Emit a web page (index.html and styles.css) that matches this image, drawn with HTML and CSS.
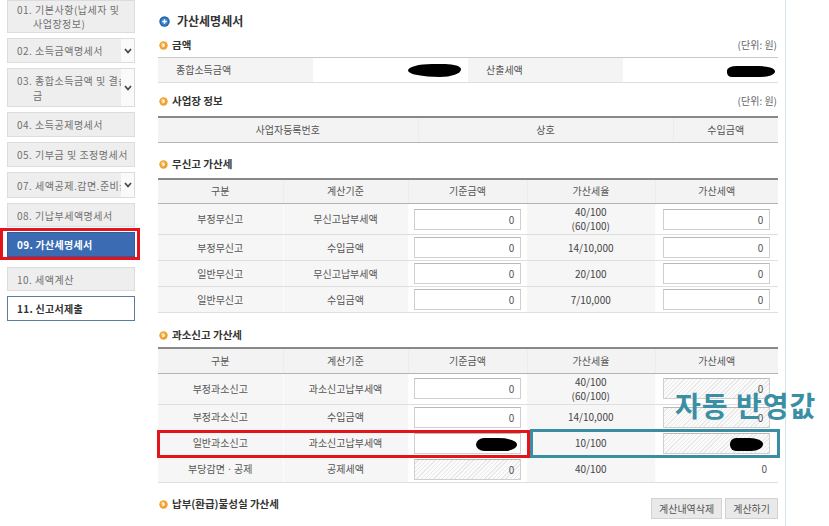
FILE: index.html
```html
<!doctype html>
<html>
<head>
	<meta charset="utf-8">
	<title>가산세명세서</title>
	<link rel="stylesheet" href="styles.css">
</head>
<body>
<div class="page">

	<ul class="menu">
		<li class="step tall first"><span class="label">01. 기본사항(납세자 및<br>사업장정보)</span></li>
		<li class="step"><span class="label">02. 소득금액명세서</span><span class="drop"><svg width="8" height="6" viewBox="0 0 8 6"><polyline points="1,1 4,4.5 7,1" fill="none" stroke="#444" stroke-width="1.7"/></svg></span></li>
		<li class="step tall wide"><span class="label">03. 종합소득금액 및 결손<br>금</span><span class="drop"><svg width="8" height="6" viewBox="0 0 8 6"><polyline points="1,1 4,4.5 7,1" fill="none" stroke="#444" stroke-width="1.7"/></svg></span></li>
		<li class="step"><span class="label">04. 소득공제명세서</span></li>
		<li class="step"><span class="label">05. 기부금 및 조정명세서</span></li>
		<li class="step"><span class="label">07. 세액공제.감면.준비금</span><span class="drop"><svg width="8" height="6" viewBox="0 0 8 6"><polyline points="1,1 4,4.5 7,1" fill="none" stroke="#444" stroke-width="1.7"/></svg></span></li>
		<li class="step"><span class="label">08. 기납부세액명세서</span></li>
		<li class="step on"><span class="label">09. 가산세명세서</span></li>
		<li class="step after"><span class="label">10. 세액계산</span></li>
		<li class="step last"><span class="label">11. 신고서제출</span></li>
	</ul>

	<div class="main">

		<h1 class="title">
			<svg width="11" height="11" viewBox="0 0 11 11"><circle cx="5.5" cy="5.5" r="5.2" fill="#2566ad"/><circle cx="5.5" cy="5.5" r="3.6" fill="#3d86cf"/><path d="M3.3 5.5h4.4M5.5 3.3v4.4" stroke="#fff" stroke-width="1.4"/></svg>
			가산세명세서
		</h1>

		<div class="head">
			<svg class="dot" width="9" height="9" viewBox="0 0 9 9"><circle cx="4.5" cy="4.5" r="4.2" fill="#f0a032"/><circle cx="4" cy="3.8" r="2.2" fill="#f8c56c"/><polyline points="3.5,2.8 5.2,4.5 3.5,6.2" fill="none" stroke="#fff" stroke-width="1.1"/></svg>
			<span>금액</span>
			<em class="unit">(단위: 원)</em>
		</div>
		<table class="sum">
			<tr>
				<td class="key">종합소득금액</td>
				<td class="val"><span class="redact r1"></span></td>
				<td class="key">산출세액</td>
				<td class="val tight"><span class="redact r2"></span></td>
			</tr>
		</table>

		<div class="head">
			<svg class="dot" width="9" height="9" viewBox="0 0 9 9"><circle cx="4.5" cy="4.5" r="4.2" fill="#f0a032"/><circle cx="4" cy="3.8" r="2.2" fill="#f8c56c"/><polyline points="3.5,2.8 5.2,4.5 3.5,6.2" fill="none" stroke="#fff" stroke-width="1.1"/></svg>
			<span>사업장 정보</span>
			<em class="unit">(단위: 원)</em>
		</div>
		<table class="grid biz">
			<colgroup><col style="width:260px"><col style="width:255px"><col></colgroup>
			<tr><th>사업자등록번호</th><th>상호</th><th>수입금액</th></tr>
		</table>

		<div class="head">
			<svg class="dot" width="9" height="9" viewBox="0 0 9 9"><circle cx="4.5" cy="4.5" r="4.2" fill="#f0a032"/><circle cx="4" cy="3.8" r="2.2" fill="#f8c56c"/><polyline points="3.5,2.8 5.2,4.5 3.5,6.2" fill="none" stroke="#fff" stroke-width="1.1"/></svg>
			<span>무신고 가산세</span>
		</div>
		<table class="grid calc">
			<colgroup><col style="width:125px"><col style="width:125px"><col style="width:119px"><col style="width:128px"><col></colgroup>
			<tr><th>구분</th><th>계산기준</th><th>기준금액</th><th>가산세율</th><th>가산세액</th></tr>
			<tr class="two">
				<td class="gray">부정무신고</td><td class="gray">무신고납부세액</td>
				<td><div class="box">0</div></td>
				<td class="gray rate">40/100<br>(60/100)</td>
				<td><div class="box">0</div></td>
			</tr>
			<tr>
				<td class="gray">부정무신고</td><td class="gray">수입금액</td>
				<td><div class="box">0</div></td>
				<td class="gray rate">14/10,000</td>
				<td><div class="box">0</div></td>
			</tr>
			<tr>
				<td class="gray">일반무신고</td><td class="gray">무신고납부세액</td>
				<td><div class="box">0</div></td>
				<td class="gray rate">20/100</td>
				<td><div class="box">0</div></td>
			</tr>
			<tr>
				<td class="gray">일반무신고</td><td class="gray">수입금액</td>
				<td><div class="box">0</div></td>
				<td class="gray rate">7/10,000</td>
				<td><div class="box">0</div></td>
			</tr>
		</table>

		<div class="head">
			<svg class="dot" width="9" height="9" viewBox="0 0 9 9"><circle cx="4.5" cy="4.5" r="4.2" fill="#f0a032"/><circle cx="4" cy="3.8" r="2.2" fill="#f8c56c"/><polyline points="3.5,2.8 5.2,4.5 3.5,6.2" fill="none" stroke="#fff" stroke-width="1.1"/></svg>
			<span>과소신고 가산세</span>
		</div>
		<div class="marked">
			<table class="grid calc">
				<colgroup><col style="width:125px"><col style="width:125px"><col style="width:119px"><col style="width:128px"><col></colgroup>
				<tr><th>구분</th><th>계산기준</th><th>기준금액</th><th>가산세율</th><th>가산세액</th></tr>
				<tr class="two">
					<td class="gray">부정과소신고</td><td class="gray">과소신고납부세액</td>
					<td><div class="box">0</div></td>
					<td class="gray rate">40/100<br>(60/100)</td>
					<td><div class="box off">0</div></td>
				</tr>
				<tr>
					<td class="gray">부정과소신고</td><td class="gray">수입금액</td>
					<td><div class="box">0</div></td>
					<td class="gray rate">14/10,000</td>
					<td><div class="box off">0</div></td>
				</tr>
				<tr>
					<td class="gray">일반과소신고</td><td class="gray">과소신고납부세액</td>
					<td><div class="box"><span class="redact r3"></span></div></td>
					<td class="gray rate">10/100</td>
					<td><div class="box off"><span class="redact r4"></span></div></td>
				</tr>
				<tr>
					<td class="gray">부당감면ㆍ공제</td><td class="gray">공제세액</td>
					<td><div class="box off">0</div></td>
					<td class="gray rate">40/100</td>
					<td class="plain">0</td>
				</tr>
			</table>
			<div class="mark red"></div>
			<div class="mark teal"></div>
			<div class="note">자동 반영값</div>
		</div>

		<div class="head last">
			<svg class="dot" width="9" height="9" viewBox="0 0 9 9"><circle cx="4.5" cy="4.5" r="4.2" fill="#f0a032"/><circle cx="4" cy="3.8" r="2.2" fill="#f8c56c"/><polyline points="3.5,2.8 5.2,4.5 3.5,6.2" fill="none" stroke="#fff" stroke-width="1.1"/></svg>
			<span>납부(환급)불성실 가산세</span>
			<div class="actions">
				<button>계산내역삭제</button>
				<button>계산하기</button>
			</div>
		</div>

	</div>

</div>
</body>
</html>
```

FILE: styles.css
```css
* {
	box-sizing: border-box;
}
body {
	margin: 0;
	color: #555;
	background: #fff;
	font: 10px/1.4 "Noto Sans CJK KR", "Noto Sans", sans-serif;
}
.page {
	display: flex;
	width: 829px;
	height: 526px;
	overflow: hidden;
}

/* left steps */
.menu {
	display: flex;
	flex-direction: column;
	gap: 5px;
	width: 140px;
	margin: 0;
	padding: 0 5px 0 7px;
	list-style: none;
}
.step {
	position: relative;
	display: flex;
	align-items: center;
	height: 25px;
	border: 1px solid #dcdcdc;
	background: #eeeeee;
	color: #707070;
	letter-spacing: 0.5px;
	line-height: 15px;
}
.step .label {
	flex: 1;
	overflow: hidden;
	padding-left: 25px;
	text-indent: -16px;
	white-space: nowrap;
}
.step.tall {
	height: 39px;
}
.step.first {
	height: 33px;
	line-height: 14px;
}
.step.first .label {
	white-space: normal;
}
.step .drop {
	display: flex;
	align-items: center;
	justify-content: center;
	align-self: stretch;
	width: 13px;
	background: #fafafa;
}
.step:nth-child(6) {
	height: 26px;
}
.step:nth-child(7) {
	height: 24px;
}
.step.on {
	border-color: #2f5d9d;
	background: #3b6cb3;
	color: #fff;
	font-weight: bold;
	letter-spacing: 0.3px;
}
.step.on:after { /* red callout */
	content: '';
	position: absolute;
	top: -5px;
	left: -8px;
	right: -6px;
	bottom: -4px;
	border: 3px solid #e4141c;
}
.step.after {
	height: 24px;
	margin-top: 5px;
}
.step.last {
	border-color: #5b7c9c;
	background: #fff;
	color: #333;
	font-weight: bold;
	letter-spacing: 0.3px;
}

/* main panel */
.main {
	width: 646px;
	padding: 10px 7px 0 18px;
	border-right: 1px solid #d6e2ec;
}
.title {
	display: flex;
	align-items: center;
	gap: 7px;
	height: 22px;
	margin: 0;
	padding-left: 1px;
	color: #333;
	font-size: 12px;
	font-weight: bold;
}
.head {
	display: flex;
	align-items: center;
	gap: 4px;
	height: 24px;
	margin-top: 1px;
	padding-left: 1px;
	color: #333;
	font-size: 10.5px;
	font-weight: bold;
}
.head + table.grid {
	margin-top: 1px;
}
table + .head,
.marked + .head {
	margin-top: 10px;
}
.sum + .head {
	margin-top: 6px;
}
.biz {
	margin-top: 3px !important;
}
.unit {
	margin-left: auto;
	margin-right: 1px;
	color: #666;
	font-size: 10px;
	font-style: normal;
	font-weight: normal;
}

table {
	width: 100%;
	border-collapse: collapse;
	table-layout: fixed;
}
.sum {
	border-top: 1px solid #c9c9c9;
	border-bottom: 1px solid #dedede;
}
.sum td {
	height: 25px;
	padding: 0;
}
.sum .key {
	padding-left: 18px;
	background: #f4f4f4;
	color: #555;
}
.sum .val {
	padding-right: 7px;
	text-align: right;
}
.sum .val.tight {
	padding-right: 3px;
}

.grid {
	border-top: 2px solid #888;
}
.grid th {
	height: 25px;
	padding: 0;
	border-bottom: 1px solid #b4b4b4;
	border-right: 1px solid #ececec;
	background: #f3f3f3;
	color: #555;
	font-weight: normal;
}
.grid th:last-child {
	border-right: 0;
}
.grid td {
	height: 26px;
	padding: 0;
	border-bottom: 1px solid #dedede;
	text-align: center;
}
.grid tr.two td {
	height: 31px;
}
.grid td.gray {
	background: #f6f6f6;
	border-right: 1px solid #fdfdfd;
}
.rate {
	color: #444;
	line-height: 14px;
}
.box {
	width: 107px;
	height: 21px;
	margin: 0 auto;
	padding: 0 6px;
	border: 1px solid #cfcfcf;
	border-top-color: #b9b9b9;
	background: #fff;
	color: #555;
	line-height: 19px;
	text-align: right;
}
.box.off {
	background: repeating-linear-gradient(135deg, #fbfbfb 0 2px, #e9e9e9 2px 3px);
}
.grid td.plain {
	padding-right: 11px;
	text-align: right;
}

.redact {
	display: inline-block;
	vertical-align: middle;
	background: #000;
}
.r1 { width: 53px; height: 13px; border-radius: 45% 30% 40% 60% / 50% 40% 60% 50%; }
.r2 { width: 48px; height: 11px; border-radius: 20% 35% 30% 10% / 40% 50% 50% 40%; }
.r3 { width: 41px; height: 13px; border-radius: 20% 45% 30% 20% / 50% 50% 50% 50%; margin-right: -3px; }
.r4 { width: 33px; height: 13px; border-radius: 20% 45% 40% 20% / 50% 50% 60% 50%; }

/* callouts over the second table */
.marked {
	position: relative;
}
.mark {
	position: absolute;
	border: 3px solid;
}
.mark.red {
	top: 83px;
	left: -1px;
	width: 373px;
	height: 28px;
	border-color: #e4141c;
}
.mark.teal {
	top: 82px;
	left: 372px;
	width: 250px;
	height: 29px;
	border-color: #3a8da2;
}
.note {
	position: absolute;
	top: 43px;
	left: 517px;
	color: #3a8fa5;
	font-size: 28px;
	font-weight: bold;
	letter-spacing: 1px;
	line-height: 30px;
	white-space: nowrap;
}

.actions {
	display: flex;
	gap: 3px;
	margin-top: 7px;
	margin-left: auto;
}
button {
	height: 21px;
	padding: 0 7px;
	border: 1px solid #d2d2d2;
	background: #e9e9e9;
	color: #555;
	font: 10px "Noto Sans CJK KR", sans-serif;
}
```
